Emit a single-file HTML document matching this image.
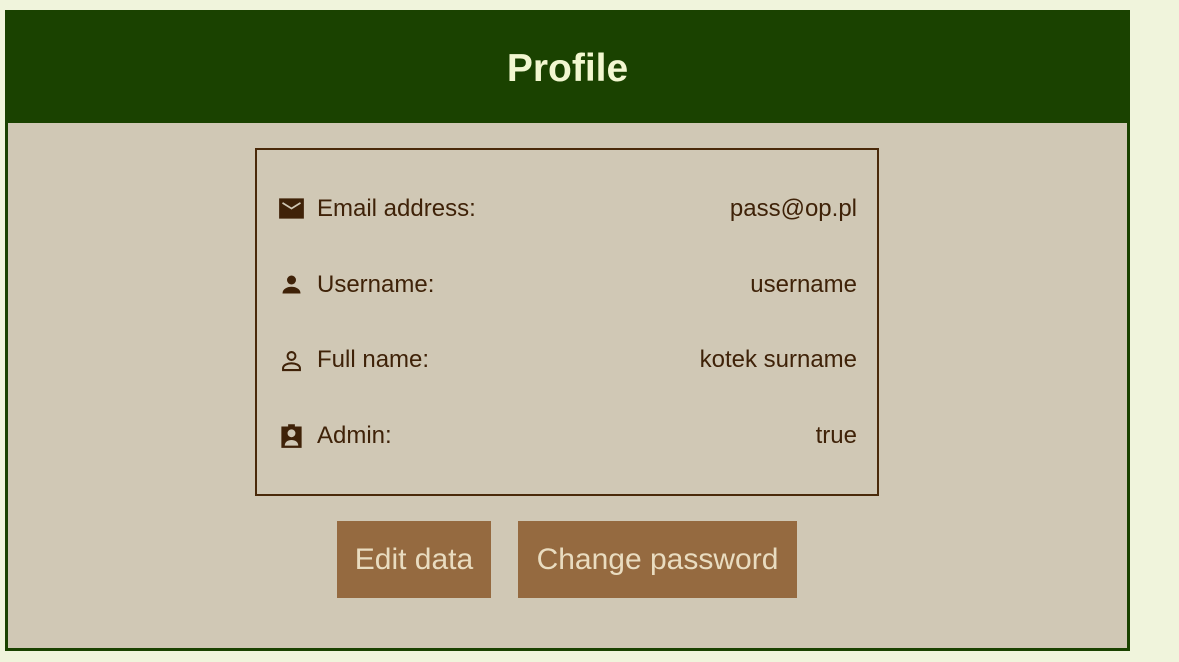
<!DOCTYPE html><html><head><style>
body{margin:0;width:1179px;height:662px;background:#f0f4dc;font-family:"Liberation Sans",sans-serif;position:relative;overflow:hidden}
.card{position:absolute;left:5px;top:10px;width:1125px;height:641px;background:#1a4200}
.hd{position:absolute;left:0;top:0;width:1125px;height:113px;color:#f2f7d0;font-size:39px;font-weight:bold;text-align:center;line-height:118px}
.bd{position:absolute;left:3px;top:113px;width:1119px;height:525px;background:#d0c8b5}
.box{position:absolute;left:255px;top:148px;width:620px;height:344px;border:2px solid #4a2a0a}
.row{position:absolute;left:317px;width:540px;font-size:24px;color:#3f2208;height:30px;line-height:30px}
.row span{float:right}
svg{position:absolute;left:278px;width:27px;height:27px;fill:#3f2208}
.btn{position:absolute;top:521px;height:77px;background:#956a40;color:#e9dcc0;font-size:30px;line-height:78px;text-align:center}
</style></head><body>
<div class="card"><div class="hd">Profile</div><div class="bd"></div></div>
<div class="box"></div>
<svg style="top:195px" viewBox="0 0 24 24"><path d="M1 3h22v18H1z"/><path d="M4 7l8 5 8-5" stroke="#d0c8b5" stroke-width="1.5" fill="none"/></svg>
<div class="row" style="top:194px">Email address:<span>pass@op.pl</span></div>
<svg style="top:271px" viewBox="0 0 24 24"><circle cx="12" cy="8" r="4"/><path d="M4 20c0-4 4-6 8-6s8 2 8 6z"/></svg>
<div class="row" style="top:270px">Username:<span>username</span></div>
<svg style="top:347px" viewBox="0 0 24 24" fill="none" stroke="#3f2208" stroke-width="1.8"><circle cx="12" cy="8" r="3.5" fill="none"/><path d="M4.5 20.5v-1.5c0-3 4-4.5 7.5-4.5s7.5 1.5 7.5 4.5v1.5z" fill="none"/></svg>
<div class="row" style="top:345px">Full name:<span>kotek surname</span></div>
<svg style="top:422px" viewBox="0 0 24 24"><path d="M3 4h6V2h6v2h6v19H3z"/><circle cx="12" cy="10" r="3.5" fill="#d0c8b5"/><path d="M6 21c0-3.5 3-5 6-5s6 1.5 6 5z" fill="#d0c8b5"/></svg>
<div class="row" style="top:421px">Admin:<span>true</span></div>
<div class="btn" style="left:337px;width:154px">Edit data</div>
<div class="btn" style="left:518px;width:279px">Change password</div>
</body></html>
